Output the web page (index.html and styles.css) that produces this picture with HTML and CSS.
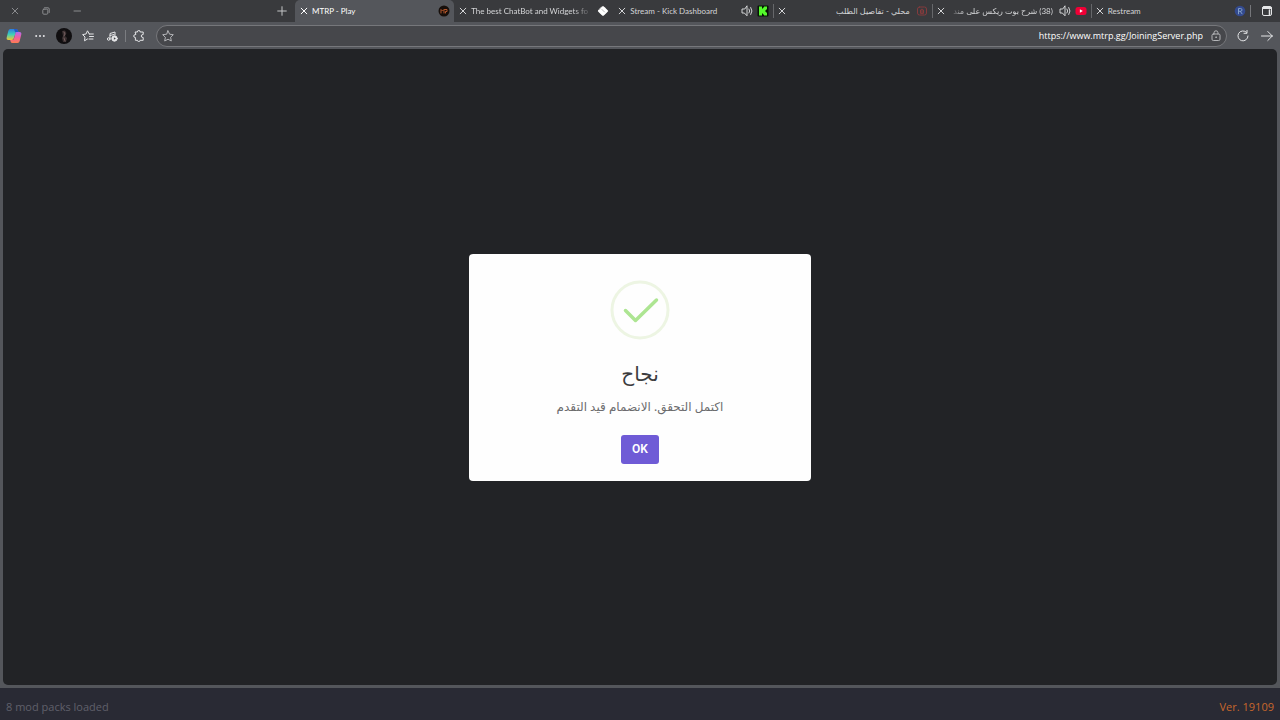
FILE: index.html
```html
<!DOCTYPE html>
<html lang="en">
<head>
<meta charset="utf-8">
<title>MTRP - Play</title>
<link rel="stylesheet" href="styles.css">
</head>
<body>
<svg class="defs" aria-hidden="true">
  <symbol id="close" viewBox="0 0 8 8"><path d="M1.200 1.200l5.600 5.600M6.800 1.200L1.200 6.800"/></symbol>
  <symbol id="sound" viewBox="0 0 12 12"><path d="M6 1.200v9.600L3.400 8H1V4h2.400zM8 4q1.500 2 0 4M9.800 2.500q2.500 3.500 0 7"/></symbol>
</svg>
<header class="browser">
  <div class="tabstrip">
    <div class="window-controls">
      <button class="icon-btn" aria-label="Close window"><svg class="i8 thin"><use href="#close"/></svg></button>
      <button class="icon-btn" aria-label="Restore"><svg class="i8 thin" viewBox="0 0 8 8"><rect x=".8" y="2.200" width="5" height="5" rx="1"/><path d="M2.500.8H6q1.200 0 1.200 1.200v3.500"/></svg></button>
      <button class="icon-btn" aria-label="Minimize"><svg class="i8 thin" viewBox="0 0 8 8"><path d="M1 4h6.500"/></svg></button>
    </div>
    <button class="icon-btn new-tab" aria-label="New tab"><svg class="i10" viewBox="0 0 10 10"><path d="M5 .7v8.600M.7 5h8.600"/></svg></button>
    <nav class="tabs" aria-label="Tabs">
      <div class="tab active">
        <button class="icon-btn" aria-label="Close tab"><svg class="i8"><use href="#close"/></svg></button>
        <span class="title">MTRP - Play</span>
        <svg class="i12 fav" viewBox="0 0 12 12"><circle cx="6" cy="6" r="5.500" fill="#170f0b"/><path d="M3 8V4.500L4.500 6 6 4.500V8M6.500 4.500H9v2H7.500V8" stroke="#b4562b"/></svg>
      </div>
      <div class="tab">
        <button class="icon-btn" aria-label="Close tab"><svg class="i8"><use href="#close"/></svg></button>
        <span class="title fade">The best ChatBot and Widgets fo</span>
        <svg class="i12 fav" viewBox="0 0 12 12"><path d="M4.700 2.200L6 1.500l1.300.7 3.200 3.200v1.200L7.300 9.800 6 10.500l-1.300-.7L1.500 6.600V5.400z" fill="#fff" stroke="#fff" stroke-width=".8"/><path d="M5 4.500L7.500 7" stroke="#a3a3a5" stroke-width=".8"/></svg>
      </div>
      <div class="tab">
        <button class="icon-btn" aria-label="Close tab"><svg class="i8"><use href="#close"/></svg></button>
        <span class="title">Stream - Kick Dashboard</span>
        <svg class="i12"><use href="#sound"/></svg>
        <svg class="i12 fav" viewBox="0 0 12 12"><rect x=".5" y=".5" width="11" height="11" rx="1" fill="#071306"/><path d="M2 1.500h3v2h1v-1h1v-1h3v3H9v1H8v1h1v1h1v3H7v-1H6v-1H5v2H2z" fill="#54f92b"/></svg>
      </div>
      <div class="tab split">
        <button class="icon-btn" aria-label="Close tab"><svg class="i8"><use href="#close"/></svg></button>
        <span class="title" dir="rtl">محلي - تفاصيل الطلب</span>
        <svg class="i12 fav" viewBox="0 0 12 12"><rect x="1.500" y="2" width="9" height="8" rx="2" stroke="#853b3d"/><path d="M4.500 8V5q1.500-2 3 0v3zM6 5v3" stroke="#853b3d"/></svg>
      </div>
      <div class="tab split">
        <button class="icon-btn" aria-label="Close tab"><svg class="i8"><use href="#close"/></svg></button>
        <span class="title fade" dir="rtl">(38) شرح بوت ريكس على مند</span>
        <svg class="i12"><use href="#sound"/></svg>
        <svg class="i12 fav" viewBox="0 0 12 12"><rect x=".5" y="2" width="11" height="8" rx="2.500" fill="#f00036"/><path d="M4.900 4.300v3.400L7.800 6z" fill="#fff"/></svg>
      </div>
      <div class="tab split">
        <button class="icon-btn" aria-label="Close tab"><svg class="i8"><use href="#close"/></svg></button>
        <span class="title">Restream</span>
        <svg class="i12 fav" viewBox="0 0 12 12"><circle cx="6" cy="6" r="5.300" fill="#334a8f"/><path d="M4.500 8.800V3.500h2q1.500 0 1.500 1.400T6.500 6.300h-2M6.300 6.300L8 8.800" stroke="#83a0c8"/></svg>
      </div>
    </nav>
    <button class="icon-btn tab-menu" aria-label="Tab actions"><svg class="i12" viewBox="0 0 12 12"><rect x="1.500" y="1.500" width="9" height="9" rx="1.500"/><path d="M2 3h8" stroke-width="2"/><path d="M8.500 5v5" stroke-width="1.500"/></svg></button>
  </div>
  <div class="toolbar">
    <button class="icon-btn" aria-label="Copilot"><svg class="i16" viewBox="0 0 16 16">
      <defs>
        <linearGradient id="ga" x1="0" y1="0" x2="0" y2="1"><stop stop-color="#2b7de0"/><stop offset=".5" stop-color="#3fd0b8"/><stop offset="1" stop-color="#f3c630"/></linearGradient>
        <linearGradient id="gb" x1="0" y1="0" x2="0" y2="1"><stop stop-color="#b06cf0"/><stop offset=".5" stop-color="#f05f9d"/><stop offset="1" stop-color="#ff7d51"/></linearGradient>
      </defs>
      <path d="M4.300 1h6q1.200 0 1.600 1.500L12.500 4H10L7.500 11Q7 12 5.500 12H2.500Q.2 12 .7 9.500L2.300 3Q2.800 1 4.300 1z" fill="url(#ga)"/>
      <path d="M8 1h2.300q1.200 0 1.600 1.500L12.500 4H9z" fill="#2457c9"/>
      <path d="M10.500 4h3Q15.800 4 15.300 6.500L13.700 13Q13.200 15 11.500 15h-5Q5 15 4.600 13.500L4.200 12H6Q7.500 12 8 10.500L9.500 5Q9.800 4 10.500 4z" fill="url(#gb)"/>
    </svg></button>
    <button class="icon-btn" aria-label="Settings and more"><svg class="i12 solid" viewBox="0 0 12 12"><circle cx="2.200" cy="6" r="1"/><circle cx="6" cy="6" r="1"/><circle cx="9.800" cy="6" r="1"/></svg></button>
    <button class="icon-btn profile" aria-label="Profile"><svg class="i16" viewBox="0 0 16 16"><circle cx="8" cy="8" r="8" fill="#100e10"/><path d="M6 3l3-.5L10.500 5 9 8l2 2-1 4H7L6 10l1-2z" fill="#3a3031"/><path d="M8 4l1 2-1 2M8 10l1 3" stroke="#766061"/></svg></button>
    <button class="icon-btn" aria-label="Favorites"><svg class="i12" viewBox="0 0 12 12"><path d="M7.300 4L5.500.8 4 4 .6 4.600 3 7l-.5 3.800L5.500 9M7.300 4h4M7.500 6.500h4M7 9h4"/></svg></button>
    <button class="icon-btn" aria-label="Media"><svg class="i12" viewBox="0 0 12 12"><path d="M4 9V3.500L9 2v3M4 5.500l4-1"/><circle cx="2.700" cy="9" r="1.300"/><circle cx="8.500" cy="8.500" r="2.700" fill="#e5e6e7"/><path d="M7.900 7.300v2.400L9.800 8.500z" fill="#424347" stroke="none"/></svg></button>
    <span class="divider"></span>
    <button class="icon-btn" aria-label="Extensions"><svg class="i12" viewBox="0 0 12 12"><path d="M2.500 2h2Q4.200.5 5.800.5T7.200 2h3v2.500q-2 0-2 1.500t2 1.500v2.800h-3q0 1.200-1.400 1.200t-1.400-1.200h-2V7.500Q.7 7.500.7 6t1.800-1.500z"/></svg></button>
    <div class="address">
      <button class="icon-btn" aria-label="Add to favorites"><svg class="i12 soft" viewBox="0 0 12 12"><path d="M6 .8l1.600 3.400 3.700.5-2.700 2.600.7 3.700L6 9.200 2.700 11l.7-3.700L.7 4.700l3.700-.5z"/></svg></button>
      <input class="url" type="text" aria-label="Address" value="https://www.mtrp.gg/JoiningServer.php">
      <svg class="i12 soft" viewBox="0 0 12 12"><rect x="2" y="4" width="8" height="6.500" rx="1.300"/><path d="M4 4V2.800q0-2 2-2t2 2V4"/><circle cx="6" cy="7.200" r=".4"/></svg>
    </div>
    <button class="icon-btn" aria-label="Refresh"><svg class="i12" viewBox="0 0 12 12"><path d="M9.500 2.300A5 5 0 1 0 11 6M10 .3v3H7"/></svg></button>
    <button class="icon-btn" aria-label="Forward"><svg class="i12" viewBox="0 0 12 12"><path d="M.5 6h11M6.800 1.500L11.300 6l-4.500 4.500"/></svg></button>
  </div>
</header>
<main class="viewport">
  <section class="dialog" role="dialog" aria-labelledby="dlg-title" aria-describedby="dlg-text">
    <svg class="success" viewBox="0 0 60 60"><circle cx="30" cy="30" r="28" stroke="#edf5e3" stroke-width="3"/><path d="M15.500 30.500L25.500 40.500 46.500 20" stroke="#ade592" stroke-width="3.500"/></svg>
    <h1 id="dlg-title" dir="rtl">نجاح</h1>
    <p id="dlg-text" dir="rtl">اكتمل التحقق. الانضمام قيد التقدم</p>
    <button class="ok">OK</button>
  </section>
</main>
<footer class="status">
  <span>8 mod packs loaded</span>
  <span class="version">Ver. 19109</span>
</footer>
</body>
</html>
```
FILE: styles.css
```css
* { box-sizing: border-box; }
body {
  margin: 0;
  min-height: 100vh;
  display: flex;
  flex-direction: column;
  background: #54565b;
  color: #e4e5e7;
  font-family: "Noto Sans", "Open Sans", "DejaVu Sans", sans-serif;
}
svg {
  display: block;
  flex: none;
  fill: none;
  stroke: currentColor;
  stroke-linecap: round;
  stroke-linejoin: round;
}
.defs { display: none; }
.i8 { width: 8px; height: 8px; }
.i10 { width: 10px; height: 10px; }
.i12 { width: 12px; height: 12px; }
.i16 { width: 16px; height: 16px; }
.i16, .fav { stroke: none; }
.solid { fill: currentColor; stroke: none; }
.thin { color: #8b8c8f; }
.soft { color: #b4b5b8; }
.icon-btn {
  flex: none;
  padding: 0;
  border: 0;
  background: none;
  color: inherit;
}

.tabstrip {
  height: 22px;
  display: flex;
  align-items: center;
  background: #393a3d;
}
.window-controls {
  flex: 1;
  display: flex;
  gap: 23px;
  padding-left: 11px;
}
.new-tab { color: #c4c5c7; margin-right: 8px; }
.tabs {
  flex: 0 1 955px;
  min-width: 0;
  height: 22px;
  display: flex;
}
.tab {
  flex: 1 1 0;
  min-width: 0;
  display: flex;
  align-items: center;
  gap: 4px;
  padding: 0 4px 0 5px;
  color: #d4d5d7;
  font-family: Lato, "Noto Sans", "DejaVu Sans", sans-serif;
  font-size: 8px;
  line-height: 16px;
}
.tab.active {
  background: #54565b;
  border-radius: 5px 5px 0 0;
  color: #fff;
}
.tab.split { background: linear-gradient(#66676a, #66676a) 0 50% / 1px 14px no-repeat; }
.title {
  flex: 1;
  min-width: 0;
  overflow: hidden;
  white-space: nowrap;
}
.title[dir="rtl"] { margin-right: 2px; }
.fade { mask-image: linear-gradient(to left, transparent, #000 20px); }
.fade[dir="rtl"] { mask-image: linear-gradient(to right, transparent, #000 16px); }
.tab-menu {
  width: 29px;
  display: flex;
  justify-content: center;
  background: linear-gradient(#75767a, #75767a) 0 50% / 1px 12px no-repeat;
  margin-right: 1px;
  padding-left: 4px;
}

.toolbar {
  display: flex;
  align-items: center;
  gap: 12px;
  padding: 3px 7px 2px 6px;
}
.profile { margin: 0 -2px; }
.divider { width: 1px; height: 12px; margin: 0 -5px; background: #7b7d81; }
.address {
  flex: 1;
  min-width: 0;
  height: 22px;
  display: flex;
  align-items: center;
  gap: 7px;
  padding: 0 4px 0 5px;
  margin: 0 -2px 0 -1px;
  border: 1px solid #76777b;
  border-radius: 11px;
  background: #46474b;
}
.url {
  flex: 1;
  min-width: 0;
  padding: 0;
  border: 0;
  outline: 0;
  background: none;
  color: #fff;
  font: 9px/16px "Open Sans", "Noto Sans", sans-serif;
  text-align: right;
}

.viewport {
  flex: 1;
  display: flex;
  align-items: center;
  justify-content: center;
  margin: 0 3px;
  border-radius: 5px;
  background: #222326;
}
.dialog {
  width: 342px;
  display: flex;
  flex-direction: column;
  align-items: center;
  padding: 26px 16px 17px;
  border-radius: 4px;
  background: #fefefe;
}
.success { width: 60px; height: 60px; }
.dialog h1 {
  margin: 18px 0 0;
  color: #3c3c3e;
  font-size: 20px;
  font-weight: 400;
  line-height: 32px;
}
.dialog p {
  margin: 7px 0 18px;
  color: #6c6c6e;
  font-size: 12px;
  line-height: 20px;
}
.ok {
  height: 29px;
  padding: 0 11px;
  border: 0;
  border-radius: 3px;
  background: #6f5bd6;
  color: #fff;
  font: 600 12px/16px Roboto, sans-serif;
}
.status {
  display: flex;
  align-items: center;
  justify-content: space-between;
  height: 32px;
  margin-top: 3px;
  padding: 5px 6px 0;
  background: #292a34;
  color: #60606b;
  font-family: "Open Sans", "Noto Sans", sans-serif;
  font-size: 11px;
  line-height: 16px;
}
.version { color: #c7672c; }
```
